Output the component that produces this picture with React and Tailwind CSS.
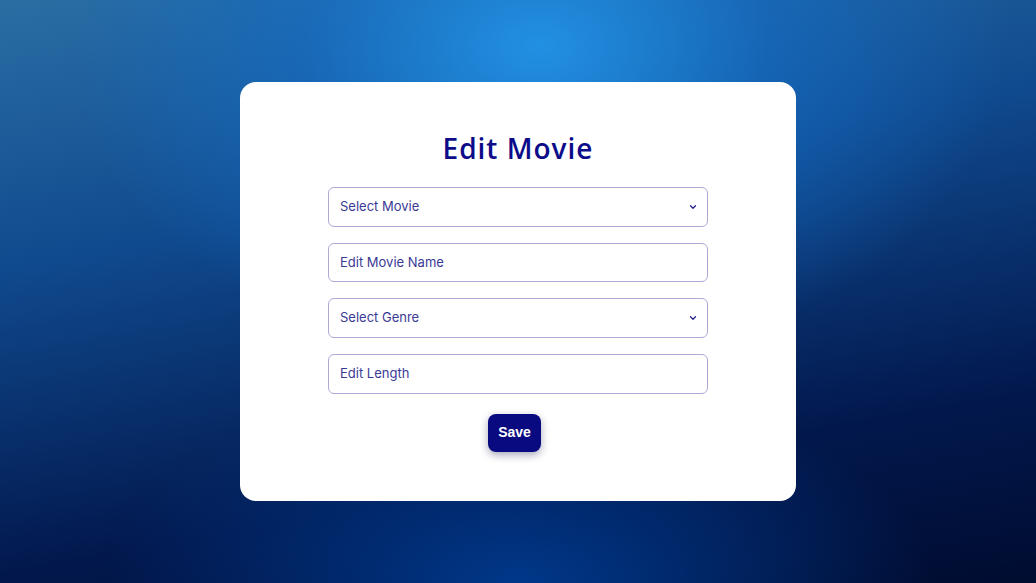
import { ChevronDown } from "lucide-react";

const fields = [
    { kind: "select", label: "Select Movie" },
    { kind: "input", label: "Edit Movie Name" },
    { kind: "select", label: "Select Genre" },
    { kind: "input", label: "Edit Length" },
];

export default function App() {
    return (
        <div className="w-[1036px] h-[583px] flex items-center justify-center bg-[radial-gradient(ellipse_45%_55%_at_52%_8%,#2290e2_0%,rgba(20,110,200,0.6)_50%,rgba(10,60,140,0)_100%),radial-gradient(ellipse_40%_35%_at_50%_100%,#00388a_0%,rgba(0,40,110,0)_100%),linear-gradient(170deg,#2a6ea4_0%,#104a8e_35%,#02184d_75%,#000c30_100%)]">
            <div className="w-[556px] h-[419px] bg-white rounded-2xl flex flex-col items-center pt-[48px]">
                <h1 className="text-[28px] leading-[36px] font-semibold tracking-[1px] text-[#0c0c8a] font-['Open_Sans',sans-serif]">
                    Edit Movie
                </h1>
                <div className="mt-[21px] w-[380px] flex flex-col gap-4 font-['Inter',sans-serif]">
                    {fields.map((f) => (
                        <div
                            key={f.label}
                            className="h-[39.7px] flex items-center justify-between pl-[11px] pr-[9px] rounded-md border border-[#aeaad8] text-[13px] text-[#3a3a96]"
                        >
                            <span>{f.label}</span>
                            {f.kind === "select" && <ChevronDown size={10} strokeWidth={3} className="text-[#22228a]" />}
                        </div>
                    ))}
                </div>
                <button className="mt-[20px] mr-[7px] h-[38px] px-[10.5px] rounded-lg bg-[#0a0a80] text-white text-[14px] font-bold font-['Liberation_Sans',sans-serif] shadow-[0_3px_8px_rgba(0,0,60,0.35)]">
                    Save
                </button>
            </div>
        </div>
    );
}
